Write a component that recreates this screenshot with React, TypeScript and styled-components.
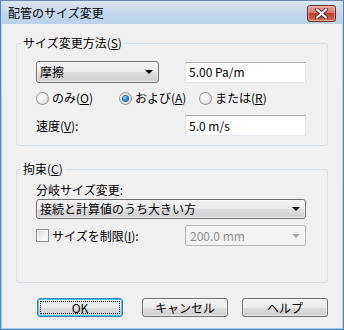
import React from "react";
import styled, { createGlobalStyle, css } from "styled-components";

const Global = createGlobalStyle`
  html, body { margin: 0; padding: 0; background: #fff; }
  body {
    font-family: "Noto Sans CJK JP", "Noto Sans", sans-serif;
    font-size: 12px;
    color: #000;
  }
  * { box-sizing: border-box; }
`;

const Window = styled.div`
  width: 344px;
  height: 330px;
  display: flex;
  flex-direction: column;
  border: 1px solid #4a88c4;
  border-top-color: #6f8aa8;
  background: linear-gradient(#dbe7f4 0px, #c3d7ed 12px, #b9d1ea 24px, #a9cbea 100%);
  padding: 0 1px 1px;
`;

const TitleBar = styled.div`
  height: 23px;
  display: flex;
  align-items: flex-start;
  padding-left: 6px;
`;

const Title = styled.div`
  flex: 1;
  margin-top: 5px;
  line-height: 14px;
  font-size: 12px;
  color: #000;
`;

const CloseButton = styled.div`
  width: 29px;
  height: 17px;
  margin: 4px 6px 0 0;
  border: 1px solid #6b2a22;
  border-radius: 3px;
  background: linear-gradient(#eaa89a 0%, #d8786a 45%, #c2432f 50%, #c95a45 85%, #d8846f 100%);
  box-shadow: inset 0 0 0 1px rgba(255, 220, 210, 0.45);
  display: flex;
  align-items: center;
  justify-content: center;
`;

const Client = styled.div`
  flex: 1;
  background: #f0f0f0;
  padding: 12px 14px 0;
  display: flex;
  flex-direction: column;
`;

const Group = styled.fieldset<{ $mt?: number }>`
  margin: ${(p) => p.$mt ?? 0}px 0 0;
  padding: 0;
  min-width: 0;
  border: 1px solid #d5dfe5;
  border-radius: 3px;
`;

const Legend = styled.legend`
  margin-left: 4px;
  padding: 0 2px;
  line-height: 14px;
`;

const GroupBody = styled.div<{ $pt: number; $pb: number }>`
  padding: ${(p) => p.$pt}px 21px ${(p) => p.$pb}px 19px;
  display: flex;
  flex-direction: column;
`;

const Row = styled.div<{ $mt?: number; $h: number }>`
  display: flex;
  align-items: center;
  justify-content: space-between;
  height: ${(p) => p.$h}px;
  margin-top: ${(p) => p.$mt ?? 0}px;
`;

const Label = styled.div`
  line-height: 14px;
  white-space: nowrap;
`;

const buttonFace = css`
  border: 1px solid #707070;
  border-radius: 3px;
  background: linear-gradient(#f2f2f2 0%, #ebebeb 50%, #dddddd 50%, #cfcfcf 100%);
  box-shadow: inset 0 0 0 1px rgba(255, 255, 255, 0.55);
`;

const Combo = styled.div<{ $w?: number; $h: number }>`
  ${buttonFace};
  width: ${(p) => (p.$w ? `${p.$w}px` : "100%")};
  height: ${(p) => p.$h}px;
  display: flex;
  align-items: center;
  padding: 0 0 0 3px;
  line-height: 14px;
`;

const ComboText = styled.div`
  flex: 1;
  white-space: nowrap;
`;

const Arrow = styled.div<{ $disabled?: boolean }>`
  width: 0;
  height: 0;
  margin-right: 5px;
  border-left: 4px solid transparent;
  border-right: 4px solid transparent;
  border-top: 4px solid ${(p) => (p.$disabled ? "#a8a8a8" : "#000")};
`;

const DisabledCombo = styled.div`
  width: 121px;
  height: 21px;
  border: 1px solid #b4b8bc;
  border-radius: 2px;
  background: #f4f4f4;
  color: #8d8d8d;
  display: flex;
  align-items: center;
  padding-left: 4px;
  line-height: 14px;
`;

const Edit = styled.div<{ $h: number }>`
  width: 121px;
  height: ${(p) => p.$h}px;
  background: #fff;
  border: 1px solid;
  border-color: #abadb3 #e2e3ea #e3e9ef #dbdfe6;
  padding: 0 3px;
  display: flex;
  align-items: center;
  line-height: 14px;
`;

const RadioRow = styled.div`
  display: grid;
  grid-template-columns: 83px 80px auto;
  align-items: center;
  height: 18px;
  margin-top: 6px;
`;

const Choice = styled.label`
  display: flex;
  align-items: center;
  gap: 3px;
  line-height: 14px;
  white-space: nowrap;
`;

const ChoiceText = styled.span`
  white-space: nowrap;
`;

const RadioDot = styled.span<{ $on?: boolean }>`
  width: 13px;
  height: 13px;
  border-radius: 50%;
  border: 1px solid #8e8f8f;
  background: radial-gradient(circle at 35% 35%, #ffffff 0%, #f0f0f0 40%, #d2d2d2 100%);
  display: flex;
  align-items: center;
  justify-content: center;
  flex: none;
  &::before {
    content: "";
    display: ${(p) => (p.$on ? "block" : "none")};
    width: 5px;
    height: 5px;
    border-radius: 50%;
    background: radial-gradient(circle at 35% 30%, #a6e3ff 0%, #2f8fd8 45%, #0a4f9c 100%);
    box-shadow: 0 0 0 1px #1c5fa8;
  }
`;

const Check = styled.span`
  width: 13px;
  height: 13px;
  border: 1px solid #8e8f8f;
  background: linear-gradient(135deg, #dcdcdc 0%, #f3f3f3 60%, #ffffff 100%);
  box-shadow: inset 0 0 0 1px #f4f4f4;
  flex: none;
`;

const ButtonRow = styled.div`
  display: flex;
  justify-content: flex-end;
  gap: 14px;
  margin-top: 15px;
`;

const Button = styled.div<{ $default?: boolean }>`
  ${buttonFace};
  position: relative;
  width: 86px;
  height: 19px;
  display: flex;
  align-items: center;
  justify-content: center;
  line-height: 14px;
  ${(p) =>
    p.$default &&
    css`
      margin-right: 5px;
      border-color: #3c7fb1;
      box-shadow: inset 0 0 0 1px #48c6f4;
      &::after {
        content: "";
        position: absolute;
        inset: 2px;
        border: 1px dotted #000;
        border-radius: 1px;
      }
    `}
`;

const Mn = styled.span`
  text-decoration: underline;
`;

export default function App() {
  return (
    <>
      <Global />
      <Window>
        <TitleBar>
          <Title>配管のサイズ変更</Title>
          <CloseButton>
            <svg width="13" height="11" viewBox="0 0 13 11">
              <path d="M2 1.5 L11 9.5 M11 1.5 L2 9.5" stroke="#5a2a24" strokeWidth="4" strokeLinecap="round" fill="none" />
              <path d="M2 1.5 L11 9.5 M11 1.5 L2 9.5" stroke="#ffffff" strokeWidth="2.2" strokeLinecap="round" fill="none" />
            </svg>
          </CloseButton>
        </TitleBar>
        <Client>
          <Group>
            <Legend>
              サイズ変更方法(<Mn>S</Mn>)
            </Legend>
            <GroupBody $pt={11} $pb={9}>
              <Row $h={22}>
                <Combo $w={123} $h={22}>
                  <ComboText>摩擦</ComboText>
                  <Arrow />
                </Combo>
                <Edit $h={21}>5.00 Pa/m</Edit>
              </Row>
              <RadioRow>
                <Choice>
                  <RadioDot />
                  <ChoiceText>
                    のみ(<Mn>O</Mn>)
                  </ChoiceText>
                </Choice>
                <Choice>
                  <RadioDot $on />
                  <ChoiceText>
                    および(<Mn>A</Mn>)
                  </ChoiceText>
                </Choice>
                <Choice>
                  <RadioDot />
                  <ChoiceText>
                    または(<Mn>R</Mn>)
                  </ChoiceText>
                </Choice>
              </RadioRow>
              <Row $h={21} $mt={8}>
                <Label>
                  速度(<Mn>V</Mn>):
                </Label>
                <Edit $h={21}>5.0 m/s</Edit>
              </Row>
            </GroupBody>
          </Group>
          <Group $mt={16}>
            <Legend>
              拘束(<Mn>C</Mn>)
            </Legend>
            <GroupBody $pt={7} $pb={36}>
              <Label>分岐サイズ変更:</Label>
              <Row $h={20} $mt={2}>
                <Combo $h={20}>
                  <ComboText>接続と計算値のうち大きい方</ComboText>
                  <Arrow />
                </Combo>
              </Row>
              <Row $h={21} $mt={6}>
                <Choice>
                  <Check />
                  <ChoiceText>
                    サイズを制限(<Mn>I</Mn>):
                  </ChoiceText>
                </Choice>
                <DisabledCombo>
                  <ComboText>200.0 mm</ComboText>
                  <Arrow $disabled />
                </DisabledCombo>
              </Row>
            </GroupBody>
          </Group>
          <ButtonRow>
            <Button $default>OK</Button>
            <Button>キャンセル</Button>
            <Button>ヘルプ</Button>
          </ButtonRow>
        </Client>
      </Window>
    </>
  );
}
